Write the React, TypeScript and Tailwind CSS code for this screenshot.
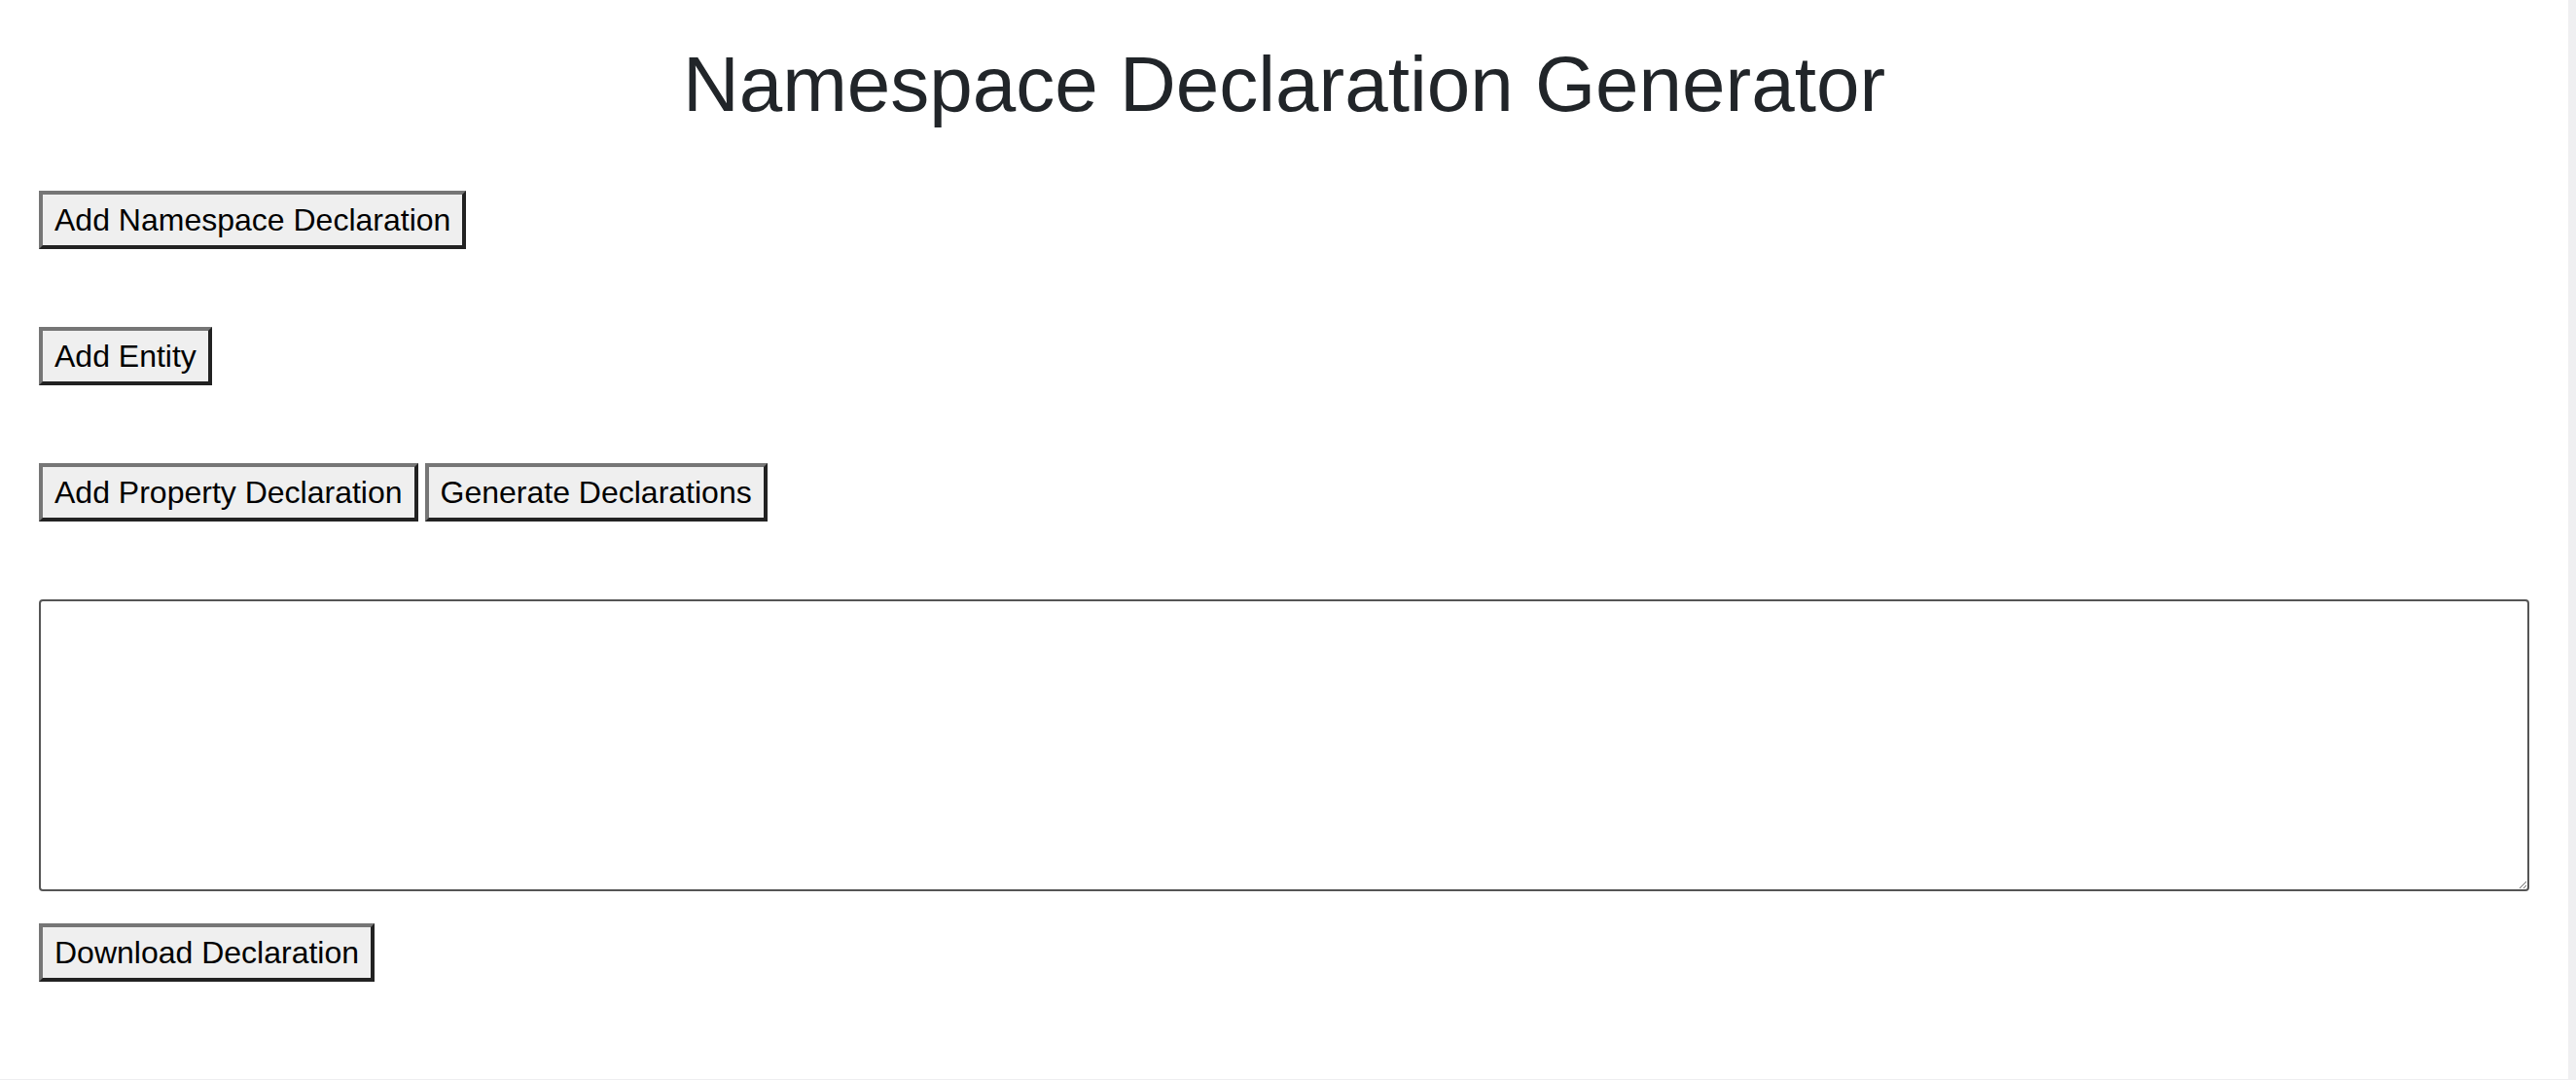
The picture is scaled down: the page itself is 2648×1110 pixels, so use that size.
import React from "react";

const btn =
  "box-border h-[60px] px-[12px] py-[2px] text-[32px] leading-[48px] text-black bg-[#efefef] border-[4px] border-solid border-t-[#767676] border-l-[#767676] border-b-[#222222] border-r-[#222222] whitespace-nowrap";

export default function App() {
  return (
    <div className="flex w-full h-[1110px] bg-white overflow-hidden" style={{ fontFamily: '"Liberation Sans", Arial, sans-serif' }}>
      <main className="flex-1 flex flex-col px-[40px] pt-[39px] border-b border-[#eeeef0]">
        <h1 className="text-[80px] leading-[96px] text-[#212529] text-center font-normal m-0">
          Namespace Declaration Generator
        </h1>
        <div className="mt-[61px] flex">
          <button className={btn}>Add Namespace Declaration</button>
        </div>
        <div className="mt-[80px] flex">
          <button className={btn}>Add Entity</button>
        </div>
        <div className="mt-[80px] flex gap-[7px]">
          <button className={btn}>Add Property Declaration</button>
          <button className={btn}>Generate Declarations</button>
        </div>
        <textarea
          className="mt-[80px] box-border w-full h-[300px] border-[2px] border-solid border-[#555555] rounded-[4px] bg-white resize"
          defaultValue=""
        />
        <div className="mt-[33px] flex">
          <button className={btn}>Download Declaration</button>
        </div>
      </main>
      <aside className="w-[8px] h-full bg-[#efeff1]" />
    </div>
  );
}
